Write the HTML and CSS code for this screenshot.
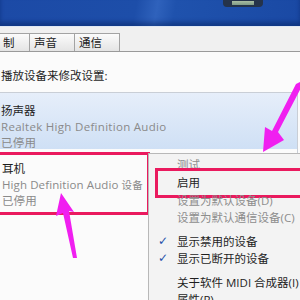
FILE: index.html
```html
<!DOCTYPE html>
<html>
<head>
<meta charset="utf-8">
<link rel="stylesheet" href="styles.css">
</head>
<body>
<div class="win">
  <div class="titlebar">
    <div class="ctrl"><div class="ctrl-in"></div></div>
  </div>
  <div class="tabstrip">
    <div class="tab t1">制</div>
    <div class="tab t2">声音</div>
    <div class="tab t3">通信</div>
  </div>
  <div class="content">
    <div class="hint">播放设备来修改设置:</div>
    <div class="list">
      <div class="item selected">
        <div class="name">扬声器</div>
        <div class="sub">Realtek High Definition Audio</div>
        <div class="sub">已停用</div>
      </div>
      <div class="item boxed">
        <div class="name">耳机</div>
        <div class="sub">High Definition Audio <span class="cjk-sm">设备</span></div>
        <div class="sub">已停用</div>
      </div>
    </div>
  </div>
  <div class="menu">
    <div class="mi dis">测试</div>
    <div class="mi hl">启用</div>
    <div class="mi dis">设置为默认设备(D)</div>
    <div class="mi dis">设置为默认通信设备(C)</div>
    <div class="msep"></div>
    <div class="mi"><span class="chk">✓</span>显示禁用的设备</div>
    <div class="mi"><span class="chk">✓</span>显示已断开的设备</div>
    <div class="msep"></div>
    <div class="mi">关于软件 MIDI 合成器(I)</div>
    <div class="mi">属性(P)</div>
  </div>
  <svg class="arrows" width="300" height="300" viewBox="0 0 300 300">
    <polygon fill="#f01ff0" points="300,82 302,86 278,132 284,140 263,152 265,127 272,131 296,84"/>
    <polygon fill="#f01ff0" points="61,193 74,212 69,211 77,258 73,258 63,213 56,216"/>
  </svg>
</div>
</body>
</html>
```
FILE: styles.css
```css
html, body {
  margin: 0;
  padding: 0;
  width: 300px;
  height: 300px;
  overflow: hidden;
  background: #fbfbfb;
}
.win {
  position: relative;
  width: 300px;
  height: 300px;
  overflow: hidden;
  font-family: "Open Sans", "Noto Sans CJK SC", sans-serif;
  font-size: 11.5px;
  color: #1e1e1e;
}
.titlebar {
  height: 26px;
  background: linear-gradient(100deg, #1c4aa6 0%, #1d4ea9 45%, #2f62bc 52%, #1f52ad 58%, #1a49a4 100%);
  border-bottom: 1px solid #dfe8f4;
  display: flex;
  box-shadow: inset 0 -4px 4px rgba(5, 30, 90, 0.45);
}
.ctrl {
  margin-left: 223px;
  width: 40px;
  height: 7px;
  background: #25334a;
  border-radius: 0 0 4px 4px;
  display: flex;
  justify-content: center;
}
.ctrl-in {
  width: 22px;
  height: 4px;
  margin-top: 1px;
  background: linear-gradient(#a9bda2, #7e9a86);
}
.tabstrip {
  height: 24px;
  background: #f0f0f0;
  border-bottom: 1px solid #9a9a9a;
  display: flex;
  align-items: flex-end;
}
.tab {
  line-height: 18px;
  background: linear-gradient(#fbfbfb, #e4e4e4);
  border: 1px solid #a3a3a3;
  border-bottom: none;
  padding-left: 4px;
  box-sizing: border-box;
  height: 18px;
  color: #222;
}
.t1 { width: 31px; margin-left: -1px; padding-left: 3px; }
.t2 { width: 46px; margin-left: -1px; }
.t3 { width: 46px; margin-left: -1px; }
.content {
  background: #fbfbfb;
}
.hint {
  height: 40px;
  line-height: 16px;
  padding-top: 16px;
  box-sizing: border-box;
  padding-left: 1px;
}
.list {
  border-top: 1px solid #c9ced6;
  border-right: 1px solid #c9ced6;
  width: 297px;
  height: 220px;
}
.item {
  line-height: 16px;
  padding-left: 1px;
}
.name { color: #1e1e1e; }
.sub { color: #8a8a8a; letter-spacing: 0.3px; white-space: nowrap; }
.boxed .sub { letter-spacing: 0.1px; }
.cjk-sm { font-size: 10.5px; }
.selected {
  height: 56px;
  box-sizing: border-box;
  padding-top: 10px;
  background: linear-gradient(#e6eefa, #cfe0f5);
}
.boxed {
  margin-top: 3px;
  margin-left: -4px;
  width: 154px;
  height: 63px;
  box-sizing: border-box;
  border: 3px solid #ea1a5e;
  padding-left: 3px;
  padding-top: 6px;
}
.menu {
  position: absolute;
  left: 148px;
  top: 153px;
  width: 160px;
  height: 160px;
  background: #f3f3f3;
  border: 1px solid #b8b8b8;
  padding-top: 2px;
  box-sizing: border-box;
}
.mi {
  height: 17px;
  line-height: 17px;
  padding-left: 28px;
  position: relative;
  color: #1e1e1e;
  white-space: nowrap;
}
.mi.dis { color: #8d8d8d; }
.mi.hl {
  height: 18px;
  line-height: 18px;
  margin-top: 1px;
  outline: 3px solid #ea1a5e;
  outline-offset: 3px;
  margin-left: 12px;
  padding-left: 16px;
}
.msep {
  height: 7px;
}
.chk {
  position: absolute;
  left: 9px;
  color: #2550a8;
  font-family: "DejaVu Sans", sans-serif;
  font-size: 12px;
}
.arrows {
  position: absolute;
  left: 0;
  top: 0;
}
```
